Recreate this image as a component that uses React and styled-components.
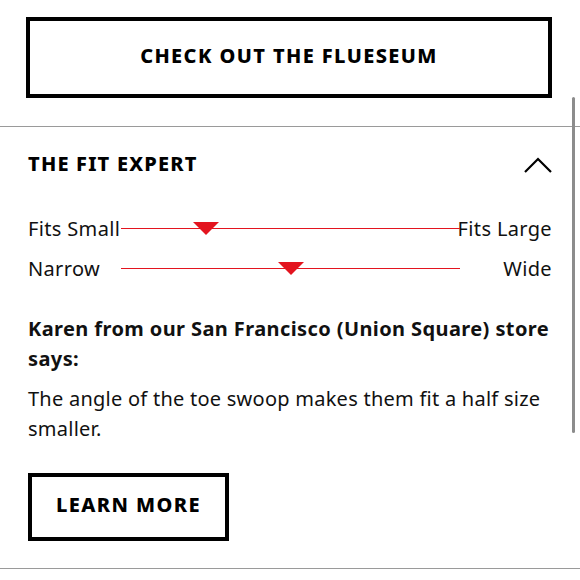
import React from "react";
import styled, { createGlobalStyle } from "styled-components";

const Global = createGlobalStyle`
  html, body { margin: 0; padding: 0; background: #fff; }
  body { font-family: "Noto Sans", sans-serif; color: #111; }
`;

const Page = styled.div`
  position: relative;
  width: 580px;
  height: 580px;
  overflow: hidden;
  padding-top: 17px;
  box-sizing: border-box;
`;

const Section = styled.section`
  padding: ${(p) => p.$pad};
`;

const OutlineButton = styled.button`
  display: flex;
  align-items: center;
  justify-content: center;
  box-sizing: border-box;
  width: ${(p) => p.$w};
  height: ${(p) => p.$h};
  border: 4px solid #000;
  background: #fff;
  font-family: "Noto Sans", sans-serif;
  font-weight: 800;
  font-size: 20px;
  letter-spacing: 1.4px;
  color: #000;
  padding: 0 0 5px;
  cursor: pointer;
`;

const Divider = styled.hr`
  margin: 0;
  border: 0;
  height: 1px;
  background: #9a9a9a;
`;

const Header = styled.div`
  display: flex;
  align-items: center;
  justify-content: space-between;
  height: 24px;
`;

const Title = styled.h2`
  margin: 0 0 3px;
  font-size: 20px;
  font-weight: 800;
  letter-spacing: 1.2px;
  color: #000;
`;

const Scale = styled.div`
  display: grid;
  grid-template-columns: 93px 1fr 92px;
  align-items: center;
  height: 40px;
  font-size: 20px;
  letter-spacing: 0.35px;
`;

const Label = styled.span`
  display: flex;
  justify-content: ${(p) => (p.$align === "right" ? "flex-end" : "flex-start")};
  white-space: nowrap;
`;

const Track = styled.div`
  position: relative;
  height: 1px;
  background: #e3141f;
`;

const Marker = styled.div`
  position: absolute;
  top: -6px;
  width: 0;
  height: 0;
  margin-left: -13px;
  border-left: 13px solid transparent;
  border-right: 13px solid transparent;
  border-top: 13px solid #e3141f;
`;

const Quote = styled.p`
  margin: 0;
  font-size: 20px;
  line-height: 30px;
  font-weight: ${(p) => (p.$bold ? 700 : 400)};
  letter-spacing: ${(p) => (p.$bold ? "0.4px" : "0.25px")};
  color: #111;
`;

const Scrollbar = styled.div`
  position: absolute;
  right: 5px;
  top: 97px;
  width: 3px;
  height: 336px;
  border-radius: 2px;
  background: #8c8c8c;
`;

const Chevron = () => (
  <svg width="28" height="16" viewBox="0 0 28 16">
    <polyline points="1,15 14,2 27,15" fill="none" stroke="#000" strokeWidth="2.2" />
  </svg>
);

const scales = [
  { left: "Fits Small", right: "Fits Large", pos: 25 },
  { left: "Narrow", right: "Wide", pos: 50 },
];

export default function App() {
  return (
    <Page>
      <Global />
      <Section $pad="0 28px 28px 26px">
        <OutlineButton $w="100%" $h="81px">CHECK OUT THE FLUESEUM</OutlineButton>
      </Section>
      <Divider />
      <Section $pad="26px 28px 27px 28px">
        <Header>
          <Title>THE FIT EXPERT</Title>
          <Chevron />
        </Header>
        <div style={{ height: 31 }} />
        {scales.map((s) => (
          <Scale key={s.left}>
            <Label $align="left">{s.left}</Label>
            <Track>
              <Marker style={{ left: `${s.pos}%` }} />
            </Track>
            <Label $align="right">{s.right}</Label>
          </Scale>
        ))}
        <div style={{ height: 26 }} />
        <Quote $bold>Karen from our San Francisco (Union Square) store says:</Quote>
        <div style={{ height: 10 }} />
        <Quote>The angle of the toe swoop makes them fit a half size smaller.</Quote>
        <div style={{ height: 29 }} />
        <OutlineButton $w="201px" $h="68px">LEARN MORE</OutlineButton>
      </Section>
      <Divider />
      <Scrollbar />
    </Page>
  );
}
